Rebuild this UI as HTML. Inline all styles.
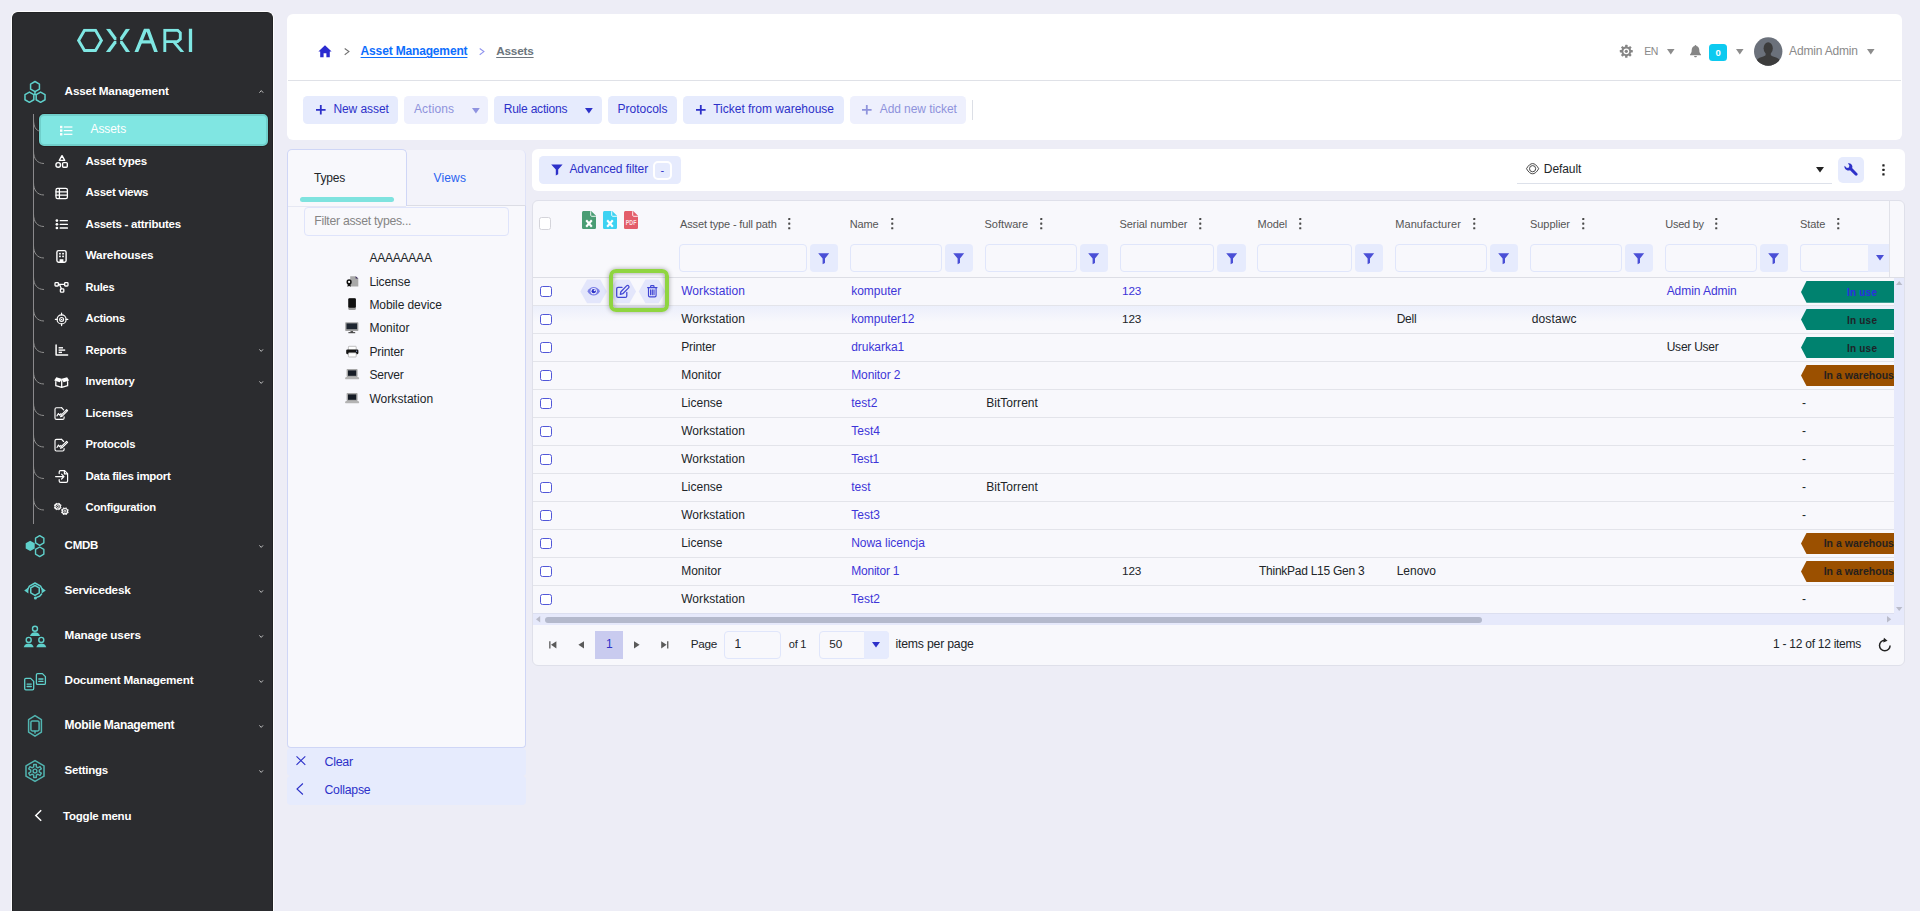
<!DOCTYPE html>
<html><head><meta charset="utf-8"><title>Assets</title>
<style>
html,body{margin:0;padding:0;overflow:hidden}
html{width:1920px;height:911px}
body{width:1920px;height:911px;overflow:hidden;background:#ededf6;font-family:"Liberation Sans", sans-serif;position:relative}
div,span,svg{position:absolute;box-sizing:border-box}
span{white-space:pre}
svg{overflow:visible}
</style></head><body>
<div style="left:12px;top:12px;width:261px;height:899px;background:#2b2c2f;border-radius:6px 6px 0 0;border:1px solid #222325;border-bottom:none;box-shadow:0 0 0 1px rgba(255,255,255,.85)"></div>
<svg style="left:0px;top:0px;" width="280" height="70" viewBox="0 0 280 70"><defs><clipPath id="lgc"><rect x="70" y="28.8" width="130" height="23.2"/></clipPath></defs>
<g clip-path="url(#lgc)"><g fill="none" stroke="#7fe7e3" stroke-width="2.9" stroke-linejoin="miter" stroke-linecap="butt">
<polygon points="78.6,40.4 84.5,30.25 95.5,30.25 101.4,40.4 95.5,50.55 84.5,50.55"/>
<path d="M135.95,53 L146.25,27.8 M156.35,53 L147.15,27.8" stroke-width="3.5"/><path d="M140.6,41.85 H152.4" stroke-width="3.1"/>
<path d="M164.8,53 V30.3 H177.6 L180.3,32.8 V39.2 L177.6,41.6 H166"/>
<path d="M173.6,41.6 L183.2,53"/>
<path d="M190.5,28 V53" stroke-width="3.3"/>
</g>
<g fill="#7fe7e3">
<polygon points="105.9,28.8 110.1,28.8 116.4,37.5 116.4,40.0 114.2,40.0"/>
<polygon points="105.9,52 110.1,52 116.4,43.3 116.4,40.8 114.2,40.8"/>
<polygon points="130.1,28.8 125.9,28.8 120.1,37.5 120.1,40.0 122.3,40.0"/>
<polygon points="130.1,52 125.9,52 120.1,43.3 120.1,40.8 122.3,40.8"/>
</g></g></svg>
<svg style="left:0px;top:0px;" width="280" height="120" viewBox="0 0 280 120"><g fill="none" stroke="#5fd0cb" stroke-width="1.5" stroke-linejoin="round">
<polygon points="39.42,89.15 35.00,91.70 30.58,89.15 30.58,84.05 35.00,81.50 39.42,84.05"/><polygon points="33.82,99.75 29.40,102.30 24.98,99.75 24.98,94.65 29.40,92.10 33.82,94.65"/><polygon points="45.02,99.75 40.60,102.30 36.18,99.75 36.18,94.65 40.60,92.10 45.02,94.65"/>
<path d="M35,91.7 V94 M35,94 L33.6,94.9 M35,94 L36.4,94.9"/></g></svg>
<span style="left:64.6px;top:84px;font-size:11.75px;line-height:14px;font-weight:700;color:#fff;letter-spacing:-0.187px;">Asset Management</span>
<svg style="left:258.5px;top:90.3px;" width="5" height="3" viewBox="0 0 5 3"><path d="M0.4,2.7 L2.3,0.6 L4.2,2.7" fill="none" stroke="#cfcfcf" stroke-width="0.9"/></svg>
<div style="left:32.8px;top:114px;width:1.4px;height:410px;background:#8a898c;"></div>
<div style="left:39px;top:114px;width:229px;height:32px;background:#80e6e2;border-radius:5px;border:2px solid #70cfcb;box-shadow:0 0 0 1px #242223"></div>
<span style="left:90.5px;top:122px;font-size:12.0px;line-height:14px;font-weight:400;color:#fff;letter-spacing:-0.076px;">Assets</span>
<span style="left:85.6px;top:154px;font-size:11.5px;line-height:14px;font-weight:700;color:#fff;letter-spacing:-0.311px;">Asset types</span>
<span style="left:85.6px;top:185px;font-size:11.5px;line-height:14px;font-weight:700;color:#fff;letter-spacing:-0.301px;">Asset views</span>
<span style="left:85.6px;top:217px;font-size:11.5px;line-height:14px;font-weight:700;color:#fff;letter-spacing:-0.272px;">Assets - attributes</span>
<span style="left:85.6px;top:248px;font-size:11.75px;line-height:14px;font-weight:700;color:#fff;letter-spacing:-0.163px;">Warehouses</span>
<span style="left:85.6px;top:281px;font-size:11.0px;line-height:13px;font-weight:700;color:#fff;letter-spacing:-0.236px;">Rules</span>
<span style="left:85.6px;top:311px;font-size:11.25px;line-height:14px;font-weight:700;color:#fff;letter-spacing:-0.271px;">Actions</span>
<span style="left:85.6px;top:343px;font-size:11.25px;line-height:14px;font-weight:700;color:#fff;letter-spacing:-0.232px;">Reports</span>
<span style="left:85.6px;top:374px;font-size:11.25px;line-height:14px;font-weight:700;color:#fff;letter-spacing:-0.193px;">Inventory</span>
<span style="left:85.6px;top:406px;font-size:11.5px;line-height:14px;font-weight:700;color:#fff;letter-spacing:-0.245px;">Licenses</span>
<span style="left:85.6px;top:437px;font-size:11.25px;line-height:14px;font-weight:700;color:#fff;letter-spacing:-0.257px;">Protocols</span>
<span style="left:85.6px;top:469px;font-size:11.5px;line-height:14px;font-weight:700;color:#fff;letter-spacing:-0.310px;">Data files import</span>
<span style="left:85.6px;top:500px;font-size:11.25px;line-height:14px;font-weight:700;color:#fff;letter-spacing:-0.267px;">Configuration</span>
<svg style="left:0px;top:0px;" width="280" height="540" viewBox="0 0 280 540"><g fill="none" stroke="#8d8d8d" stroke-width="1"><path d="M33.5,119.5 C33.5,126.5 36,130.5 39.5,131.0"/><path d="M33.5,151.0 C33.5,159.0 37.5,163.5 44,163.5"/><path d="M33.5,182.5 C33.5,190.5 37.5,195.0 44,195.0"/><path d="M33.5,214.0 C33.5,222.0 37.5,226.5 44,226.5"/><path d="M33.5,245.5 C33.5,253.5 37.5,258.0 44,258.0"/><path d="M33.5,277.0 C33.5,285.0 37.5,289.5 44,289.5"/><path d="M33.5,308.5 C33.5,316.5 37.5,321.0 44,321.0"/><path d="M33.5,340.0 C33.5,348.0 37.5,352.5 44,352.5"/><path d="M33.5,371.5 C33.5,379.5 37.5,384.0 44,384.0"/><path d="M33.5,403.0 C33.5,411.0 37.5,415.5 44,415.5"/><path d="M33.5,434.5 C33.5,442.5 37.5,447.0 44,447.0"/><path d="M33.5,466.0 C33.5,474.0 37.5,478.5 44,478.5"/><path d="M33.5,497.5 C33.5,505.5 37.5,510.0 44,510.0"/></g></svg>
<svg style="left:258.7px;top:349.2px;" width="5" height="3" viewBox="0 0 5 3"><path d="M0.4,0.4 L2.2,2.4 L4.0,0.4" fill="none" stroke="#cfcfcf" stroke-width="0.9"/></svg>
<svg style="left:258.7px;top:380.7px;" width="5" height="3" viewBox="0 0 5 3"><path d="M0.4,0.4 L2.2,2.4 L4.0,0.4" fill="none" stroke="#cfcfcf" stroke-width="0.9"/></svg>
<span style="left:64.6px;top:538px;font-size:11.5px;line-height:14px;font-weight:700;color:#fff;letter-spacing:-0.257px;">CMDB</span>
<svg style="left:258.7px;top:545.4px;" width="5" height="3" viewBox="0 0 5 3"><path d="M0.4,0.4 L2.2,2.4 L4.0,0.4" fill="none" stroke="#cfcfcf" stroke-width="0.9"/></svg>
<span style="left:64.6px;top:583px;font-size:11.75px;line-height:14px;font-weight:700;color:#fff;letter-spacing:-0.248px;">Servicedesk</span>
<svg style="left:258.7px;top:590.4px;" width="5" height="3" viewBox="0 0 5 3"><path d="M0.4,0.4 L2.2,2.4 L4.0,0.4" fill="none" stroke="#cfcfcf" stroke-width="0.9"/></svg>
<span style="left:64.6px;top:628px;font-size:11.75px;line-height:14px;font-weight:700;color:#fff;letter-spacing:-0.181px;">Manage users</span>
<svg style="left:258.7px;top:635.4px;" width="5" height="3" viewBox="0 0 5 3"><path d="M0.4,0.4 L2.2,2.4 L4.0,0.4" fill="none" stroke="#cfcfcf" stroke-width="0.9"/></svg>
<span style="left:64.6px;top:673px;font-size:11.75px;line-height:14px;font-weight:700;color:#fff;letter-spacing:-0.197px;">Document Management</span>
<svg style="left:258.7px;top:680.4px;" width="5" height="3" viewBox="0 0 5 3"><path d="M0.4,0.4 L2.2,2.4 L4.0,0.4" fill="none" stroke="#cfcfcf" stroke-width="0.9"/></svg>
<span style="left:64.6px;top:718px;font-size:12.0px;line-height:14px;font-weight:700;color:#fff;letter-spacing:-0.302px;">Mobile Management</span>
<svg style="left:258.7px;top:725.4px;" width="5" height="3" viewBox="0 0 5 3"><path d="M0.4,0.4 L2.2,2.4 L4.0,0.4" fill="none" stroke="#cfcfcf" stroke-width="0.9"/></svg>
<span style="left:64.6px;top:763px;font-size:11.5px;line-height:14px;font-weight:700;color:#fff;letter-spacing:-0.263px;">Settings</span>
<svg style="left:258.7px;top:770.4px;" width="5" height="3" viewBox="0 0 5 3"><path d="M0.4,0.4 L2.2,2.4 L4.0,0.4" fill="none" stroke="#cfcfcf" stroke-width="0.9"/></svg>
<span style="left:63.1px;top:809px;font-size:11.5px;line-height:14px;font-weight:700;color:#fff;letter-spacing:-0.239px;">Toggle menu</span>
<svg style="left:34px;top:809px;" width="9" height="13" viewBox="0 0 9 13"><path d="M7.2,1.2 L1.8,6.5 L7.2,11.8" fill="none" stroke="#fff" stroke-width="1.5"/></svg>
<svg style="left:0px;top:0px;" width="280" height="800" viewBox="0 0 280 800"><rect x="60" y="125.8" width="2.4" height="2.4" fill="#fff"/><rect x="63.8" y="126.4" width="8.6" height="1.2" fill="#fff"/><rect x="60" y="129.4" width="2.4" height="2.4" fill="#fff"/><rect x="63.8" y="130.0" width="8.6" height="1.2" fill="#fff"/><rect x="60" y="133.10000000000002" width="2.4" height="2.4" fill="#fff"/><rect x="63.8" y="133.70000000000002" width="8.6" height="1.2" fill="#fff"/><g fill="none" stroke="#fff" stroke-width="1.4" stroke-linejoin="round" stroke-linecap="round"><path d="M62,155.7 L64.7,160.4 H59.3 Z"/><circle cx="58.2" cy="164.9" r="2.3"/><rect x="62.6" y="162.6" width="4.7" height="4.6" rx="1"/></g><g fill="none" stroke="#fff" stroke-width="1.3" stroke-linejoin="round" stroke-linecap="round"><rect x="56" y="188.4" width="11.4" height="10.2" rx="1.6"/><path d="M56,191.8 H67.4 M56,195.2 H67.4 M59.4,188.6 V198.4"/></g><circle cx="56.9" cy="220.6" r="1.35" fill="#fff"/><rect x="59.6" y="219.95" width="8.4" height="1.3" rx="0.5" fill="#fff"/><circle cx="56.9" cy="224.3" r="1.35" fill="#fff"/><rect x="59.6" y="223.65" width="8.4" height="1.3" rx="0.5" fill="#fff"/><circle cx="56.9" cy="228.0" r="1.35" fill="#fff"/><rect x="59.6" y="227.35" width="8.4" height="1.3" rx="0.5" fill="#fff"/><g fill="none" stroke="#fff" stroke-width="1.4" stroke-linejoin="round" stroke-linecap="round"><rect x="56.9" y="250.6" width="9.2" height="11.6" rx="1.7"/></g><g fill="#fff"><rect x="59.1" y="252.9" width="1.7" height="1.6"/><rect x="62.2" y="252.9" width="1.7" height="1.6"/><rect x="59.1" y="255.6" width="1.7" height="1.6"/><rect x="62.2" y="255.6" width="1.7" height="1.6"/><path d="M59.6,262 V259.2 H63.4 V262 Z"/></g><g fill="none" stroke="#fff" stroke-width="1.3" stroke-linejoin="round" stroke-linecap="round"><rect x="55" y="282.6" width="3.4" height="3.4" rx="0.8"/><rect x="64.6" y="282.6" width="3.4" height="3.4" rx="0.8"/><rect x="60.4" y="288.8" width="3.4" height="3.4" rx="0.8"/><path d="M58.4,284.3 H64.6 M59.4,284.3 L61.4,288.8"/></g><g fill="none" stroke="#fff" stroke-width="1.2" stroke-linejoin="round" stroke-linecap="round"><circle cx="61.6" cy="319.4" r="4.5"/><circle cx="61.6" cy="319.4" r="1.9"/><path d="M61.6,313.2 V315 M61.6,323.8 V325.6 M55.4,319.4 H57.2 M66,319.4 H67.8"/></g><circle cx="61.6" cy="319.4" r="0.7" fill="#fff"/><g fill="none" stroke="#fff" stroke-width="1.5" stroke-linejoin="round" stroke-linecap="round"><path d="M56.1,345 V354.9 H67.6"/></g><g fill="#fff"><rect x="58.6" y="347.1" width="4.4" height="1.4"/><rect x="58.6" y="349.4" width="6.6" height="1.4"/><rect x="58.6" y="351.7" width="3.4" height="1.4"/></g><path d="M56.3,377.2 L61.7,378.7 L67.1,377.2 L69.2,380.6 L63.6,382.2 L61.7,379.6 L59.8,382.2 L54.2,380.6 Z" fill="#fff"/><g fill="none" stroke="#fff" stroke-width="1.3" stroke-linejoin="round" stroke-linecap="round"><path d="M55.8,381.6 V385.7 L61.7,387.4 L67.6,385.7 V381.6 M61.7,380.4 V387.2"/></g><g fill="none" stroke="#fff" stroke-width="1.15" stroke-linejoin="round" stroke-linecap="round"><path d="M61.6,407.7 H56.5 C55.6,407.7 55,408.3 55,409.2 V417.90000000000003 C55,418.8 55.6,419.40000000000003 56.5,419.40000000000003 H62.6 C63.5,419.40000000000003 64.1,418.8 64.1,417.90000000000003 V416.90000000000003"/><path d="M61.6,407.7 L63.6,409.90000000000003"/><path d="M57,415.90000000000003 L58.4,413.5 L59.6,415.1 L61,413.7"/><path d="M67.6,410.7 L62.2,416.1 L60.6,416.7 L61.2,415.1 L66.6,409.7 Z"/></g><g fill="none" stroke="#fff" stroke-width="1.15" stroke-linejoin="round" stroke-linecap="round"><path d="M61.6,439.29999999999995 H56.5 C55.6,439.29999999999995 55,439.9 55,440.79999999999995 V449.5 C55,450.4 55.6,451.0 56.5,451.0 H62.6 C63.5,451.0 64.1,450.4 64.1,449.5 V448.5"/><path d="M61.6,439.29999999999995 L63.6,441.5"/><path d="M57,447.5 L58.4,445.09999999999997 L59.6,446.7 L61,445.29999999999995"/><path d="M67.6,442.29999999999995 L62.2,447.7 L60.6,448.29999999999995 L61.2,446.7 L66.6,441.29999999999995 Z"/></g><g fill="none" stroke="#fff" stroke-width="1.2" stroke-linejoin="round" stroke-linecap="round"><path d="M59.2,473.6 V472 C59.2,471.2 59.8,470.7 60.6,470.7 H64.6 L67.6,473.7 V481 C67.6,481.8 67,482.4 66.2,482.4 H60.6 C59.8,482.4 59.2,481.8 59.2,481 V479.6"/><path d="M64.4,470.9 V473.9 H67.4"/><path d="M55.6,476.6 H63.8 M61.6,474.2 L64,476.6 L61.6,479"/></g><g fill="none" stroke="#fff" stroke-width="1.15"><circle cx="57.7" cy="506.5" r="2.7"/><circle cx="57.7" cy="506.5" r="1.08" stroke-width="0.9"/></g><g fill="none" stroke="#fff" stroke-width="1.5" stroke-linecap="butt"><path d="M60.47,507.65 L61.26,507.97"/><path d="M58.85,509.27 L59.17,510.06"/><path d="M56.55,509.27 L56.23,510.06"/><path d="M54.93,507.65 L54.14,507.97"/><path d="M54.93,505.35 L54.14,505.03"/><path d="M56.55,503.73 L56.23,502.94"/><path d="M58.85,503.73 L59.17,502.94"/><path d="M60.47,505.35 L61.26,505.03"/></g><g fill="none" stroke="#fff" stroke-width="1.15"><circle cx="64.9" cy="511.2" r="2.7"/><circle cx="64.9" cy="511.2" r="1.08" stroke-width="0.9"/></g><g fill="none" stroke="#fff" stroke-width="1.5" stroke-linecap="butt"><path d="M67.67,512.35 L68.46,512.67"/><path d="M66.05,513.97 L66.37,514.76"/><path d="M63.75,513.97 L63.43,514.76"/><path d="M62.13,512.35 L61.34,512.67"/><path d="M62.13,510.05 L61.34,509.73"/><path d="M63.75,508.43 L63.43,507.64"/><path d="M66.05,508.43 L66.37,507.64"/><path d="M67.67,510.05 L68.46,509.73"/></g><polygon points="34.70,548.50 30.20,551.10 25.70,548.50 25.70,543.30 30.20,540.70 34.70,543.30" fill="#5fd0cb"/><g fill="none" stroke="#5fd0cb" stroke-width="1.4" stroke-linejoin="round" stroke-linecap="round"><polygon points="43.86,542.90 39.70,545.30 35.54,542.90 35.54,538.10 39.70,535.70 43.86,538.10"/><polygon points="43.86,554.20 39.70,556.60 35.54,554.20 35.54,549.40 39.70,547.00 43.86,549.40"/></g><g fill="none" stroke="#5fd0cb" stroke-width="1.5" stroke-linejoin="round" stroke-linecap="round"><polygon points="39.24,592.85 35.00,595.30 30.76,592.85 30.76,587.95 35.00,585.50 39.24,587.95"/><path d="M27.4,590 L29.4,586.2 L35,583 L40.6,586.2 L42.6,590"/><path d="M41.6,594 L39.6,596.2 L36,597.6"/></g><path d="M28.4,587.6 L24.2,590.5 L28.4,593.4 Z M41.6,587.6 L45.8,590.5 L41.6,593.4 Z" fill="#5fd0cb"/><circle cx="35.4" cy="598" r="1.5" fill="#5fd0cb"/><g fill="none" stroke="#5fd0cb" stroke-width="1.4" stroke-linejoin="round" stroke-linecap="round"><circle cx="35" cy="628.7" r="2.5"/></g><path d="M30.0,636.1 C30.8,633.3000000000001 32.8,632.3000000000001 35,632.3000000000001 C37.2,632.3000000000001 39.2,633.3000000000001 40.0,636.1 Z" fill="#5fd0cb"/><g fill="none" stroke="#5fd0cb" stroke-width="1.4" stroke-linejoin="round" stroke-linecap="round"><circle cx="28.7" cy="639.9" r="2.5"/></g><path d="M23.7,647.3 C24.5,644.5 26.5,643.5 28.7,643.5 C30.9,643.5 32.9,644.5 33.7,647.3 Z" fill="#5fd0cb"/><g fill="none" stroke="#5fd0cb" stroke-width="1.4" stroke-linejoin="round" stroke-linecap="round"><circle cx="41.3" cy="639.9" r="2.5"/></g><path d="M36.3,647.3 C37.099999999999994,644.5 39.099999999999994,643.5 41.3,643.5 C43.5,643.5 45.5,644.5 46.3,647.3 Z" fill="#5fd0cb"/><g fill="none" stroke="#5fd0cb" stroke-width="1.3" stroke-linejoin="round" stroke-linecap="round"><path d="M36.4,674.8000000000001 C36.4,674.1 36.9,673.6 37.6,673.6 H42.4 L45.4,676.6 V683.1999999999999 C45.4,683.9 44.9,684.4 44.199999999999996,684.4 H37.6 C36.9,684.4 36.4,683.9 36.4,683.1999999999999 Z"/><path d="M38.8,679.0 H43.0 M38.8,681.4 H43.0"/></g><g fill="none" stroke="#5fd0cb" stroke-width="1.3" stroke-linejoin="round" stroke-linecap="round"><path d="M24.7,679.6 C24.7,678.9 25.2,678.4 25.9,678.4 H30.700000000000003 L33.7,681.4 V688.5999999999999 C33.7,689.3 33.2,689.8 32.5,689.8 H25.9 C25.2,689.8 24.7,689.3 24.7,688.5999999999999 Z"/><path d="M27.099999999999998,684.1 H31.300000000000004 M27.099999999999998,686.5 H31.300000000000004"/></g><g fill="none" stroke="#52b5b1" stroke-width="1.5" stroke-linejoin="round" stroke-linecap="round"><path d="M35,715.6 L41.4,719.6 V732.2 L35,736.2 L28.6,732.2 V719.6 Z"/></g><g fill="none" stroke="#52b5b1" stroke-width="1.5" stroke-linejoin="round" stroke-linecap="round"><rect x="30.9" y="721" width="8.2" height="10" rx="1.4"/><path d="M35,731.2 V733"/></g><g fill="none" stroke="#52b5b1" stroke-width="1.5" stroke-linejoin="round" stroke-linecap="round"><polygon points="44.01,776.20 35.00,781.40 25.99,776.20 25.99,765.80 35.00,760.60 44.01,765.80"/></g><g fill="none" stroke="#52b5b1" stroke-width="1.4" stroke-linejoin="round" stroke-linecap="round"><polygon points="33.70,766.80 33.67,764.43 36.33,764.43 36.30,766.80 37.99,767.77 40.02,766.56 41.35,768.87 39.29,770.02 39.29,771.98 41.35,773.13 40.02,775.44 37.99,774.23 36.30,775.20 36.33,777.57 33.67,777.57 33.70,775.20 32.01,774.23 29.98,775.44 28.65,773.13 30.71,771.98 30.71,770.02 28.65,768.87 29.98,766.56 32.01,767.77"/><circle cx="35" cy="771" r="1.9"/></g></svg>
<div style="left:287px;top:14px;width:1615px;height:126px;background:#fff;border-radius:6px"></div>
<div style="left:288px;top:80px;width:1613px;height:1px;background:#dfe1e7;"></div>
<svg style="left:318.2px;top:45.4px;" width="14.2" height="12.6" viewBox="0 0 14.2 12.6"><path d="M7,0.2 L13.6,6.6 H11.8 V12.2 H8.4 V8.2 H5.6 V12.2 H2.2 V6.6 H0.4 Z" fill="#2b2bd0"/></svg>
<svg style="left:343.5px;top:48px;" width="6" height="7.2" viewBox="0 0 6 7.2"><path d="M0.7,0.5 L4.9,3.6 L0.7,6.7" fill="none" stroke="#6f6f6f" stroke-width="1.1"/></svg>
<span style="left:360.6px;top:44px;font-size:12.0px;line-height:14px;font-weight:700;color:#0d6efd;letter-spacing:-0.160px;text-decoration:underline;text-underline-offset:1.5px;text-decoration-thickness:1px">Asset Management</span>
<svg style="left:478.5px;top:48px;" width="6" height="7.2" viewBox="0 0 6 7.2"><path d="M0.7,0.5 L4.9,3.6 L0.7,6.7" fill="none" stroke="#8f93ee" stroke-width="1.1"/></svg>
<span style="left:496.2px;top:44px;font-size:11.75px;line-height:14px;font-weight:700;color:#6c757d;letter-spacing:-0.189px;text-decoration:underline;text-underline-offset:1.5px;text-decoration-thickness:1px">Assets</span>
<svg style="left:1620px;top:45.2px;" width="12.6" height="12.6" viewBox="0 0 12.6 12.6"><g fill="#858585"><rect x="5.1" y="-0.2" width="2.4" height="3" rx="0.4" transform="rotate(0 6.3 6.3)"/><rect x="5.1" y="-0.2" width="2.4" height="3" rx="0.4" transform="rotate(45 6.3 6.3)"/><rect x="5.1" y="-0.2" width="2.4" height="3" rx="0.4" transform="rotate(90 6.3 6.3)"/><rect x="5.1" y="-0.2" width="2.4" height="3" rx="0.4" transform="rotate(135 6.3 6.3)"/><rect x="5.1" y="-0.2" width="2.4" height="3" rx="0.4" transform="rotate(180 6.3 6.3)"/><rect x="5.1" y="-0.2" width="2.4" height="3" rx="0.4" transform="rotate(225 6.3 6.3)"/><rect x="5.1" y="-0.2" width="2.4" height="3" rx="0.4" transform="rotate(270 6.3 6.3)"/><rect x="5.1" y="-0.2" width="2.4" height="3" rx="0.4" transform="rotate(315 6.3 6.3)"/><circle cx="6.3" cy="6.3" r="4.9"/><circle cx="6.3" cy="6.3" r="2.9" fill="#fff"/><circle cx="6.3" cy="6.3" r="1.6"/></g></svg>
<span style="left:1644.3px;top:45px;font-size:10.5px;line-height:13px;font-weight:400;color:#8a8a8a;letter-spacing:-0.525px;">EN</span>
<svg style="left:1667.3px;top:49.2px;" width="7.6" height="5.6" viewBox="0 0 7.6 5.6"><path d="M0,0 H7.6 L3.8,5.6 Z" fill="#8c8c8c"/></svg>
<svg style="left:1690.1px;top:45.3px;" width="11" height="12.4" viewBox="0 0 11 12.4"><path d="M5.5,0 C6.1,0 6.4,0.4 6.4,0.9 C8.4,1.4 9.3,3 9.3,5 C9.3,7.6 10.1,8.6 11,9.4 V10.2 H0 V9.4 C0.9,8.6 1.7,7.6 1.7,5 C1.7,3 2.6,1.4 4.6,0.9 C4.6,0.4 4.9,0 5.5,0 Z M4.1,10.9 H6.9 C6.9,11.8 6.3,12.3 5.5,12.3 C4.7,12.3 4.1,11.8 4.1,10.9 Z" fill="#858585"/></svg>
<div style="left:1709.2px;top:44.2px;width:17.8px;height:16.7px;background:#0dcaf0;border-radius:3.5px"></div>
<span style="left:1715.4px;top:47px;font-size:9.5px;line-height:11px;font-weight:700;color:#fff;">0</span>
<svg style="left:1736.1px;top:49.2px;" width="7.6" height="5.6" viewBox="0 0 7.6 5.6"><path d="M0,0 H7.6 L3.8,5.6 Z" fill="#8c8c8c"/></svg>
<svg style="left:1754px;top:37px;" width="28.5" height="29" viewBox="0 0 28.5 29"><defs><clipPath id="avc"><circle cx="14.2" cy="14.5" r="14.2"/></clipPath></defs>
<circle cx="14.2" cy="14.5" r="14.2" fill="#6b717b"/>
<g clip-path="url(#avc)" fill="#3c3c3c"><ellipse cx="14.2" cy="11.3" rx="4.6" ry="6"/>
<path d="M11.6,15 H16.8 V18.2 C18.5,19.6 22.5,20 24.8,22 C26,23 26.5,25 26.5,30 H1.9 C1.9,25 2.4,23 3.6,22 C5.9,20 9.9,19.6 11.6,18.2 Z"/></g></svg>
<span style="left:1789.1px;top:44px;font-size:12.0px;line-height:14px;font-weight:400;color:#8a8a8a;letter-spacing:-0.181px;">Admin Admin</span>
<svg style="left:1867.4px;top:49.2px;" width="7.6" height="5.6" viewBox="0 0 7.6 5.6"><path d="M0,0 H7.6 L3.8,5.6 Z" fill="#8c8c8c"/></svg>
<div style="left:303px;top:96px;width:95px;height:28px;background:#e6ebfd;border-radius:4.5px"></div>
<svg style="left:315.5px;top:105.4px;" width="9.6" height="9.6" viewBox="0 0 9.6 9.6"><path d="M4.8,0 V9.6 M0,4.8 H9.6" stroke="#2d31c9" stroke-width="1.8" fill="none"/></svg>
<span style="left:333.4px;top:102px;font-size:12.0px;line-height:14px;font-weight:400;color:#2d31c9;letter-spacing:-0.074px;">New asset</span>
<div style="left:404px;top:96px;width:84px;height:28px;background:#eef0fd;border-radius:4.5px"></div>
<span style="left:414px;top:102px;font-size:12.0px;line-height:14px;font-weight:400;color:#8f93dc;letter-spacing:0.099px;">Actions</span>
<svg style="left:471.6px;top:107.6px;" width="7.8" height="5.6" viewBox="0 0 7.8 5.6"><path d="M0,0 H7.8 L3.9,5.6 Z" fill="#8f93e0"/></svg>
<div style="left:494px;top:96px;width:108px;height:28px;background:#e6ebfd;border-radius:4.5px"></div>
<span style="left:503.7px;top:102px;font-size:12.0px;line-height:14px;font-weight:400;color:#2d31c9;letter-spacing:-0.213px;">Rule actions</span>
<svg style="left:585.4px;top:107.6px;" width="7.8" height="5.6" viewBox="0 0 7.8 5.6"><path d="M0,0 H7.8 L3.9,5.6 Z" fill="#2d31c9"/></svg>
<div style="left:608px;top:96px;width:69px;height:28px;background:#e6ebfd;border-radius:4.5px"></div>
<span style="left:617.5px;top:102px;font-size:12.0px;line-height:14px;font-weight:400;color:#2d31c9;letter-spacing:-0.004px;">Protocols</span>
<div style="left:683px;top:96px;width:161px;height:28px;background:#e6ebfd;border-radius:4.5px"></div>
<svg style="left:695.5px;top:105.4px;" width="9.6" height="9.6" viewBox="0 0 9.6 9.6"><path d="M4.8,0 V9.6 M0,4.8 H9.6" stroke="#2d31c9" stroke-width="1.8" fill="none"/></svg>
<span style="left:713.2px;top:102px;font-size:12.0px;line-height:14px;font-weight:400;color:#2d31c9;letter-spacing:-0.007px;">Ticket from warehouse</span>
<div style="left:850px;top:96px;width:116px;height:28px;background:#eef0fd;border-radius:4.5px"></div>
<svg style="left:861.6px;top:105.4px;" width="9.6" height="9.6" viewBox="0 0 9.6 9.6"><path d="M4.8,0 V9.6 M0,4.8 H9.6" stroke="#8f93dc" stroke-width="1.8" fill="none"/></svg>
<span style="left:879.7px;top:102px;font-size:12.0px;line-height:14px;font-weight:400;color:#8f93dc;letter-spacing:-0.063px;">Add new ticket</span>
<div style="left:972px;top:100px;width:1px;height:20px;background:#dcdfe6;"></div>
<div style="left:532px;top:149px;width:1373px;height:42px;background:#fff;border-radius:6px"></div>
<div style="left:539px;top:156px;width:142px;height:28px;background:#e6ebfd;border-radius:4.5px"></div>
<svg style="left:550.6px;top:164.4px;" width="11.8" height="11.8" viewBox="0 0 11.8 11.8"><path d="M0.2,0.4 H11.6 L7.2,5.6 V10.2 L4.8,11.6 V5.6 Z" fill="#2d31c9"/></svg>
<span style="left:569.4px;top:162px;font-size:12.0px;line-height:14px;font-weight:400;color:#2d31c9;letter-spacing:-0.041px;">Advanced filter</span>
<div style="left:653px;top:160.8px;width:19px;height:19px;background:transparent;border:2px solid #fff;border-radius:5px"></div>
<span style="left:660.6px;top:164px;font-size:11px;line-height:13px;font-weight:400;color:#2d31c9;">-</span>
<svg style="left:1525.6px;top:163px;" width="13.2" height="11.4" viewBox="0 0 13.2 11.4"><g fill="none" stroke="#333" stroke-width="0.9"><path d="M0.5,5.7 C2.4,2.2 4.6,0.6 6.6,0.6 C8.6,0.6 10.8,2.2 12.7,5.7 C10.8,9.2 8.6,10.8 6.6,10.8 C4.6,10.8 2.4,9.2 0.5,5.7 Z"/><circle cx="6.6" cy="5.7" r="3.1"/></g></svg>
<span style="left:1543.8px;top:162px;font-size:12.0px;line-height:14px;font-weight:400;color:#212529;letter-spacing:-0.082px;">Default</span>
<div style="left:1517px;top:183px;width:315px;height:1px;background:#dde1ea;"></div>
<svg style="left:1816.3px;top:167.4px;" width="8" height="5.4" viewBox="0 0 8 5.4"><path d="M0,0 H8 L4,5.4 Z" fill="#222"/></svg>
<div style="left:1838px;top:157px;width:26px;height:26px;background:#e6ebfd;border-radius:5px"></div>
<svg style="left:1844.3px;top:163.4px;" width="14" height="13" viewBox="0 0 14 13"><path d="M3.9,0.3 C5.8,-0.3 7.9,0.9 8.3,2.9 C8.5,3.7 8.4,4.4 8.1,5.1 L13.2,10.2 C13.8,10.8 13.8,11.7 13.2,12.3 C12.6,12.9 11.7,12.9 11.1,12.3 L6,7.2 C4.3,7.9 2.2,7.3 1.1,5.7 C0.5,4.8 0.3,3.7 0.6,2.7 L2.9,5 L4.9,4.4 L5.4,2.5 Z" fill="#2d31c9"/></svg>
<svg style="left:1881.6px;top:164.2px;" width="3" height="12" viewBox="0 0 3 12"><g fill="#222"><rect x="0.3" y="0.2" width="2.3" height="2.3" rx="0.5"/><rect x="0.3" y="4.7" width="2.3" height="2.3" rx="0.5"/><rect x="0.3" y="9.2" width="2.3" height="2.3" rx="0.5"/></g></svg>
<div style="left:287px;top:205.5px;width:239px;height:542px;background:#f8f8fc;border:1px solid #cfd6f6;border-top:none;border-radius:0 0 4px 4px"></div>
<div style="left:406px;top:150px;width:120px;height:56px;background:#f3f3fa;border-right:1px solid #dfe3f8;border-bottom:1px solid #dcdde5;border-radius:0 5px 0 0"></div>
<div style="left:287px;top:149px;width:120px;height:57px;background:#f8f8fc;border:1px solid #cfd6f6;border-bottom:none;border-radius:5px 5px 0 0"></div>
<div style="left:288px;top:205.5px;width:118px;height:1px;background:#e6e8f3;"></div>
<span style="left:313.9px;top:171px;font-size:12.0px;line-height:14px;font-weight:400;color:#212529;letter-spacing:-0.159px;">Types</span>
<span style="left:433.6px;top:171px;font-size:12.0px;line-height:14px;font-weight:400;color:#2962f0;letter-spacing:0.134px;">Views</span>
<div style="left:300px;top:197.2px;width:94px;height:4.6px;background:#7fe3df;border-radius:3px"></div>
<div style="left:304px;top:207px;width:205px;height:29px;background:#f8f8fc;border:1px solid #dfe4fb;border-radius:4px"></div>
<span style="left:314.3px;top:214px;font-size:12.25px;line-height:15px;font-weight:400;color:#858585;letter-spacing:-0.283px;">Filter asset types...</span>
<span style="left:369.4px;top:251px;font-size:12.0px;line-height:14px;font-weight:400;color:#212529;letter-spacing:-0.218px;">AAAAAAAA</span>
<span style="left:369.4px;top:275px;font-size:12.0px;line-height:14px;font-weight:400;color:#212529;letter-spacing:-0.073px;">License</span>
<span style="left:369.4px;top:298px;font-size:12.0px;line-height:14px;font-weight:400;color:#212529;letter-spacing:-0.078px;">Mobile device</span>
<span style="left:369.4px;top:321px;font-size:12.0px;line-height:14px;font-weight:400;color:#212529;letter-spacing:-0.002px;">Monitor</span>
<span style="left:369.4px;top:345px;font-size:12.0px;line-height:14px;font-weight:400;color:#212529;letter-spacing:-0.114px;">Printer</span>
<span style="left:369.4px;top:368px;font-size:12.0px;line-height:14px;font-weight:400;color:#212529;letter-spacing:-0.208px;">Server</span>
<span style="left:369.4px;top:392px;font-size:12.0px;line-height:14px;font-weight:400;color:#212529;letter-spacing:0.063px;">Workstation</span>
<svg style="left:345.6px;top:275.2px;" width="13" height="12.5" viewBox="0 0 13 12.5"><path d="M4.2,1.2 H9.6 L12.3,3.6 V11.6 H4.2 Z" fill="#a9a9a9"/><path d="M9.6,1.2 L12.3,3.6 H9.6 Z" fill="#3a2a5a"/><circle cx="3.1" cy="6.9" r="2.6" fill="#111"/><circle cx="3.1" cy="6.9" r="1.1" fill="#fff"/><path d="M1.8,9 L1.4,11.8 L3.1,10.9 L4.8,11.8 L4.4,9 Z" fill="#111"/></svg>
<svg style="left:347.9px;top:298px;" width="8.2" height="12.2" viewBox="0 0 8.2 12.2"><rect x="0.3" y="0.2" width="7.6" height="11.8" rx="1.3" fill="#9a9a9a"/><rect x="0.3" y="0.2" width="7.6" height="9.6" rx="1.2" fill="#111"/></svg>
<svg style="left:345.3px;top:322.2px;" width="13.6" height="11.2" viewBox="0 0 13.6 11.2"><rect x="0.2" y="0.2" width="13.2" height="8.8" rx="0.8" fill="#a2a2a2"/><rect x="1.5" y="1.4" width="10.6" height="5.8" fill="#1d2530"/><rect x="5.5" y="9" width="2.6" height="1.4" fill="#555"/><rect x="3.4" y="10.2" width="6.8" height="1" fill="#333"/></svg>
<svg style="left:345.6px;top:345.6px;" width="12.6" height="11.4" viewBox="0 0 12.6 11.4"><rect x="2.4" y="0.3" width="7.8" height="4" rx="0.6" fill="#fff" stroke="#999" stroke-width="0.6"/><rect x="0.2" y="3.6" width="12.2" height="4.6" rx="1.1" fill="#151515"/><rect x="2.4" y="6.8" width="7.8" height="4.2" rx="0.6" fill="#fff" stroke="#999" stroke-width="0.6"/><circle cx="10.6" cy="5.2" r="0.6" fill="#9ad"/></svg>
<svg style="left:344.9px;top:369.3px;" width="14.2" height="10.3" viewBox="0 0 14.2 10.3"><rect x="1.6" y="0.1" width="11" height="8" rx="0.8" fill="#a6a6a6"/><rect x="3" y="1.4" width="8.2" height="5.4" fill="#161c26"/><path d="M0.7,7.9 H13.5 L14.2,9.4 C14.2,9.9 13.9,10.2 13.5,10.2 H0.7 C0.3,10.2 0,9.9 0,9.4 Z" fill="#b4b4b4"/></svg>
<svg style="left:344.9px;top:393px;" width="14.2" height="10.3" viewBox="0 0 14.2 10.3"><rect x="1.6" y="0.1" width="11" height="8" rx="0.8" fill="#a6a6a6"/><rect x="3" y="1.4" width="8.2" height="5.4" fill="#161c26"/><path d="M0.7,7.9 H13.5 L14.2,9.4 C14.2,9.9 13.9,10.2 13.5,10.2 H0.7 C0.3,10.2 0,9.9 0,9.4 Z" fill="#b4b4b4"/></svg>
<div style="left:287px;top:748px;width:239px;height:28.2px;background:#e6ebfd;border-radius:4px"></div>
<div style="left:287px;top:776.4px;width:239px;height:28.4px;background:#e6ebfd;border-radius:4px"></div>
<svg style="left:295.6px;top:756.3px;" width="9.8" height="9.2" viewBox="0 0 9.8 9.2"><path d="M0.5,0.4 L9.3,8.8 M9.3,0.4 L0.5,8.8" stroke="#2d31c9" stroke-width="1.1" fill="none"/></svg>
<span style="left:324.5px;top:755px;font-size:12.5px;line-height:15px;font-weight:400;color:#2d31c9;letter-spacing:-0.306px;">Clear</span>
<svg style="left:296px;top:783px;" width="8" height="12" viewBox="0 0 8 12"><path d="M6.9,0.5 L1,6 L6.9,11.5" stroke="#2d31c9" stroke-width="1.1" fill="none"/></svg>
<span style="left:324.5px;top:783px;font-size:12.25px;line-height:15px;font-weight:400;color:#2d31c9;letter-spacing:-0.222px;">Collapse</span>
<div style="left:532px;top:200px;width:1373px;height:466px;background:#f8f8fc;border:1px solid #dfe0ea;border-radius:6px"></div>
<div style="left:1889px;top:201px;width:1px;height:76px;background:#e1e2e9;"></div>
<div style="left:533px;top:277px;width:1371px;height:1px;background:#dddee5;"></div>
<div style="left:1894px;top:278px;width:10px;height:347px;background:#e6e9fb;"></div>
<svg style="left:1895.8px;top:280.6px;" width="6.4" height="4" viewBox="0 0 6.4 4"><path d="M0,4 L3.2,0 L6.4,4 Z" fill="#b9bbc9"/></svg>
<svg style="left:1895.8px;top:607.4px;" width="6.4" height="4" viewBox="0 0 6.4 4"><path d="M0,0 L3.2,4 L6.4,0 Z" fill="#b9bbc9"/></svg>
<div style="left:539.3px;top:217px;width:11.6px;height:13.2px;background:#fff;border:1px solid #d4d4da;border-radius:2.5px"></div>
<svg style="left:582px;top:211px;" width="14" height="18.1" viewBox="0 0 14 18.1"><path d="M1.6,0 H9.2 L14,4.8 V16.5 C14,17.4 13.3,18.1 12.4,18.1 H1.6 C0.7,18.1 0,17.4 0,16.5 V1.6 C0,0.7 0.7,0 1.6,0 Z" fill="#4a9d74"/><path d="M8.7,0.2 V4.3 C8.7,4.9 9.1,5.3 9.7,5.3 H13.9" fill="none" stroke="#fff" stroke-width="0.9"/><path d="M4.2,9.2 L9.8,15.8 M9.8,9.2 L4.2,15.8" stroke="#fff" stroke-width="2.1" fill="none"/></svg>
<svg style="left:602.9px;top:211px;" width="14" height="18.1" viewBox="0 0 14 18.1"><path d="M1.6,0 H9.2 L14,4.8 V16.5 C14,17.4 13.3,18.1 12.4,18.1 H1.6 C0.7,18.1 0,17.4 0,16.5 V1.6 C0,0.7 0.7,0 1.6,0 Z" fill="#3dd2f2"/><path d="M8.7,0.2 V4.3 C8.7,4.9 9.1,5.3 9.7,5.3 H13.9" fill="none" stroke="#fff" stroke-width="0.9"/><path d="M4.2,9.2 L9.8,15.8 M9.8,9.2 L4.2,15.8" stroke="#fff" stroke-width="2.1" fill="none"/></svg>
<svg style="left:623.6px;top:211px;" width="14" height="18.1" viewBox="0 0 14 18.1"><path d="M1.6,0 H9.2 L14,4.8 V16.5 C14,17.4 13.3,18.1 12.4,18.1 H1.6 C0.7,18.1 0,17.4 0,16.5 V1.6 C0,0.7 0.7,0 1.6,0 Z" fill="#e35d6a"/><path d="M8.7,0.2 V4.3 C8.7,4.9 9.1,5.3 9.7,5.3 H13.9" fill="none" stroke="#fff" stroke-width="0.9"/><text x="7.1" y="13.9" font-size="7.2" font-weight="700" fill="#fff" fill-opacity="0.85" text-anchor="middle" font-family="Liberation Sans, sans-serif" textLength="10.6" lengthAdjust="spacingAndGlyphs">PDF</text></svg>
<span style="left:680px;top:218px;font-size:11.0px;line-height:13px;font-weight:400;color:#555;letter-spacing:-0.138px;">Asset type - full path</span>
<svg style="left:788.4px;top:218.4px;" width="2.5" height="11.4" viewBox="0 0 2.5 11.4"><g fill="#4a4a4a"><rect x="0.2" y="0" width="2.1" height="2.1" rx="0.4"/><rect x="0.2" y="4.6" width="2.1" height="2.1" rx="0.4"/><rect x="0.2" y="9.2" width="2.1" height="2.1" rx="0.4"/></g></svg>
<div style="left:679px;top:244px;width:128px;height:28px;background:#f8f8fc;border:1px solid #e0e6fb;border-radius:4px"></div>
<div style="left:810px;top:244px;width:28px;height:28px;background:#e6ebfd;border-radius:4px"></div>
<svg style="left:818.3px;top:252.6px;" width="11.4" height="11.4" viewBox="0 0 11.4 11.4"><path d="M0.2,0.3 H11.2 L7,5.4 V10 L4.6,11.2 V5.4 Z" fill="#4a4fd6"/></svg>
<span style="left:849.7px;top:218px;font-size:11.0px;line-height:13px;font-weight:400;color:#555;letter-spacing:-0.098px;">Name</span>
<svg style="left:890.5px;top:218.4px;" width="2.5" height="11.4" viewBox="0 0 2.5 11.4"><g fill="#4a4a4a"><rect x="0.2" y="0" width="2.1" height="2.1" rx="0.4"/><rect x="0.2" y="4.6" width="2.1" height="2.1" rx="0.4"/><rect x="0.2" y="9.2" width="2.1" height="2.1" rx="0.4"/></g></svg>
<div style="left:850px;top:244px;width:92px;height:28px;background:#f8f8fc;border:1px solid #e0e6fb;border-radius:4px"></div>
<div style="left:945px;top:244px;width:28px;height:28px;background:#e6ebfd;border-radius:4px"></div>
<svg style="left:953.3px;top:252.6px;" width="11.4" height="11.4" viewBox="0 0 11.4 11.4"><path d="M0.2,0.3 H11.2 L7,5.4 V10 L4.6,11.2 V5.4 Z" fill="#4a4fd6"/></svg>
<span style="left:984.4px;top:218px;font-size:11.0px;line-height:13px;font-weight:400;color:#555;letter-spacing:0.050px;">Software</span>
<svg style="left:1040.0px;top:218.4px;" width="2.5" height="11.4" viewBox="0 0 2.5 11.4"><g fill="#4a4a4a"><rect x="0.2" y="0" width="2.1" height="2.1" rx="0.4"/><rect x="0.2" y="4.6" width="2.1" height="2.1" rx="0.4"/><rect x="0.2" y="9.2" width="2.1" height="2.1" rx="0.4"/></g></svg>
<div style="left:985px;top:244px;width:92px;height:28px;background:#f8f8fc;border:1px solid #e0e6fb;border-radius:4px"></div>
<div style="left:1080px;top:244px;width:28px;height:28px;background:#e6ebfd;border-radius:4px"></div>
<svg style="left:1088.3px;top:252.6px;" width="11.4" height="11.4" viewBox="0 0 11.4 11.4"><path d="M0.2,0.3 H11.2 L7,5.4 V10 L4.6,11.2 V5.4 Z" fill="#4a4fd6"/></svg>
<span style="left:1119.4px;top:218px;font-size:11.0px;line-height:13px;font-weight:400;color:#555;letter-spacing:-0.039px;">Serial number</span>
<svg style="left:1199.2px;top:218.4px;" width="2.5" height="11.4" viewBox="0 0 2.5 11.4"><g fill="#4a4a4a"><rect x="0.2" y="0" width="2.1" height="2.1" rx="0.4"/><rect x="0.2" y="4.6" width="2.1" height="2.1" rx="0.4"/><rect x="0.2" y="9.2" width="2.1" height="2.1" rx="0.4"/></g></svg>
<div style="left:1120px;top:244px;width:94px;height:28px;background:#f8f8fc;border:1px solid #e0e6fb;border-radius:4px"></div>
<div style="left:1217px;top:244px;width:29px;height:28px;background:#e6ebfd;border-radius:4px"></div>
<svg style="left:1225.8px;top:252.6px;" width="11.4" height="11.4" viewBox="0 0 11.4 11.4"><path d="M0.2,0.3 H11.2 L7,5.4 V10 L4.6,11.2 V5.4 Z" fill="#4a4fd6"/></svg>
<span style="left:1257.5px;top:218px;font-size:11.0px;line-height:13px;font-weight:400;color:#555;letter-spacing:-0.037px;">Model</span>
<svg style="left:1299.3px;top:218.4px;" width="2.5" height="11.4" viewBox="0 0 2.5 11.4"><g fill="#4a4a4a"><rect x="0.2" y="0" width="2.1" height="2.1" rx="0.4"/><rect x="0.2" y="4.6" width="2.1" height="2.1" rx="0.4"/><rect x="0.2" y="9.2" width="2.1" height="2.1" rx="0.4"/></g></svg>
<div style="left:1257px;top:244px;width:95px;height:28px;background:#f8f8fc;border:1px solid #e0e6fb;border-radius:4px"></div>
<div style="left:1355px;top:244px;width:28px;height:28px;background:#e6ebfd;border-radius:4px"></div>
<svg style="left:1363.3px;top:252.6px;" width="11.4" height="11.4" viewBox="0 0 11.4 11.4"><path d="M0.2,0.3 H11.2 L7,5.4 V10 L4.6,11.2 V5.4 Z" fill="#4a4fd6"/></svg>
<span style="left:1395.2px;top:218px;font-size:11.0px;line-height:13px;font-weight:400;color:#555;letter-spacing:0.086px;">Manufacturer</span>
<svg style="left:1472.5px;top:218.4px;" width="2.5" height="11.4" viewBox="0 0 2.5 11.4"><g fill="#4a4a4a"><rect x="0.2" y="0" width="2.1" height="2.1" rx="0.4"/><rect x="0.2" y="4.6" width="2.1" height="2.1" rx="0.4"/><rect x="0.2" y="9.2" width="2.1" height="2.1" rx="0.4"/></g></svg>
<div style="left:1395px;top:244px;width:92px;height:28px;background:#f8f8fc;border:1px solid #e0e6fb;border-radius:4px"></div>
<div style="left:1490px;top:244px;width:28px;height:28px;background:#e6ebfd;border-radius:4px"></div>
<svg style="left:1498.3px;top:252.6px;" width="11.4" height="11.4" viewBox="0 0 11.4 11.4"><path d="M0.2,0.3 H11.2 L7,5.4 V10 L4.6,11.2 V5.4 Z" fill="#4a4fd6"/></svg>
<span style="left:1530px;top:218px;font-size:11.0px;line-height:13px;font-weight:400;color:#555;letter-spacing:-0.048px;">Supplier</span>
<svg style="left:1581.6px;top:218.4px;" width="2.5" height="11.4" viewBox="0 0 2.5 11.4"><g fill="#4a4a4a"><rect x="0.2" y="0" width="2.1" height="2.1" rx="0.4"/><rect x="0.2" y="4.6" width="2.1" height="2.1" rx="0.4"/><rect x="0.2" y="9.2" width="2.1" height="2.1" rx="0.4"/></g></svg>
<div style="left:1530px;top:244px;width:92px;height:28px;background:#f8f8fc;border:1px solid #e0e6fb;border-radius:4px"></div>
<div style="left:1625px;top:244px;width:28px;height:28px;background:#e6ebfd;border-radius:4px"></div>
<svg style="left:1633.3px;top:252.6px;" width="11.4" height="11.4" viewBox="0 0 11.4 11.4"><path d="M0.2,0.3 H11.2 L7,5.4 V10 L4.6,11.2 V5.4 Z" fill="#4a4fd6"/></svg>
<span style="left:1665.2px;top:218px;font-size:11.0px;line-height:13px;font-weight:400;color:#555;letter-spacing:-0.240px;">Used by</span>
<svg style="left:1715.3999999999999px;top:218.4px;" width="2.5" height="11.4" viewBox="0 0 2.5 11.4"><g fill="#4a4a4a"><rect x="0.2" y="0" width="2.1" height="2.1" rx="0.4"/><rect x="0.2" y="4.6" width="2.1" height="2.1" rx="0.4"/><rect x="0.2" y="9.2" width="2.1" height="2.1" rx="0.4"/></g></svg>
<div style="left:1665px;top:244px;width:92px;height:28px;background:#f8f8fc;border:1px solid #e0e6fb;border-radius:4px"></div>
<div style="left:1760px;top:244px;width:28px;height:28px;background:#e6ebfd;border-radius:4px"></div>
<svg style="left:1768.3px;top:252.6px;" width="11.4" height="11.4" viewBox="0 0 11.4 11.4"><path d="M0.2,0.3 H11.2 L7,5.4 V10 L4.6,11.2 V5.4 Z" fill="#4a4fd6"/></svg>
<span style="left:1800px;top:218px;font-size:11.0px;line-height:13px;font-weight:400;color:#555;letter-spacing:-0.108px;">State</span>
<svg style="left:1837.3px;top:218.4px;" width="2.5" height="11.4" viewBox="0 0 2.5 11.4"><g fill="#4a4a4a"><rect x="0.2" y="0" width="2.1" height="2.1" rx="0.4"/><rect x="0.2" y="4.6" width="2.1" height="2.1" rx="0.4"/><rect x="0.2" y="9.2" width="2.1" height="2.1" rx="0.4"/></g></svg>
<div style="left:1800px;top:244px;width:89px;height:28px;background:#f8f8fc;border:1px solid #e0e6fb;border-right:none;border-radius:4px 0 0 4px"></div>
<div style="left:1868px;top:244px;width:21px;height:28px;background:#e6ebfd;"></div>
<svg style="left:1876.3px;top:255.4px;" width="8" height="5.6" viewBox="0 0 8 5.6"><path d="M0,0 H8 L4,5.6 Z" fill="#4a4fd6"/></svg>
<div style="left:533px;top:306px;width:1361px;height:16px;background:linear-gradient(#eceffb,#f8f8fc);"></div>
<div style="left:540.2px;top:286.1px;width:11.6px;height:11.2px;background:#fff;border:1.2px solid #5157d8;border-radius:2.5px"></div>
<span style="left:681.2px;top:284px;font-size:12.0px;line-height:14px;font-weight:400;color:#3d35d8;letter-spacing:0.058px;">Workstation</span>
<span style="left:851.2px;top:284px;font-size:12.0px;line-height:14px;font-weight:400;color:#3d35d8;letter-spacing:-0.004px;">komputer</span>
<span style="left:1122px;top:284px;font-size:11.75px;line-height:14px;font-weight:400;color:#3d35d8;letter-spacing:-0.146px;">123</span>
<span style="left:1666.7px;top:284px;font-size:12.0px;line-height:14px;font-weight:400;color:#3d35d8;letter-spacing:-0.067px;">Admin Admin</span>
<svg style="left:1801px;top:281.0px;" width="93" height="21.8" viewBox="0 0 93 21.8"><path d="M0,10.9 L5.5,0 H93 V21.8 H5.5 Z" fill="#00826f"/></svg>
<span style="left:1846.9px;top:287px;font-size:10.0px;line-height:12px;font-weight:700;color:#2b2fe0;letter-spacing:0.235px;">In use</span>
<div style="left:533px;top:305.0px;width:1361px;height:1px;background:#e3e4ea;"></div>
<div style="left:540.2px;top:314.1px;width:11.6px;height:11.2px;background:#fff;border:1.2px solid #5157d8;border-radius:2.5px"></div>
<span style="left:681.2px;top:312px;font-size:12.0px;line-height:14px;font-weight:400;color:#212529;letter-spacing:0.058px;">Workstation</span>
<span style="left:851.2px;top:312px;font-size:12.0px;line-height:14px;font-weight:400;color:#3d35d8;letter-spacing:-0.013px;">komputer12</span>
<span style="left:1122px;top:312px;font-size:11.75px;line-height:14px;font-weight:400;color:#212529;letter-spacing:-0.146px;">123</span>
<span style="left:1396.7px;top:312px;font-size:12.0px;line-height:14px;font-weight:400;color:#212529;letter-spacing:-0.263px;">Dell</span>
<span style="left:1531.7px;top:312px;font-size:12.0px;line-height:14px;font-weight:400;color:#212529;letter-spacing:0.149px;">dostawc</span>
<svg style="left:1801px;top:309.0px;" width="93" height="21" viewBox="0 0 93 21"><path d="M0,10.5 L5.5,0 H93 V21 H5.5 Z" fill="#00826f"/></svg>
<span style="left:1846.9px;top:315px;font-size:10.0px;line-height:12px;font-weight:700;color:#1f2328;letter-spacing:0.235px;">In use</span>
<div style="left:533px;top:333.0px;width:1361px;height:1px;background:#e3e4ea;"></div>
<div style="left:540.2px;top:342.1px;width:11.6px;height:11.2px;background:#fff;border:1.2px solid #5157d8;border-radius:2.5px"></div>
<span style="left:681.2px;top:340px;font-size:12.0px;line-height:14px;font-weight:400;color:#212529;letter-spacing:-0.130px;">Printer</span>
<span style="left:851.2px;top:340px;font-size:12.0px;line-height:14px;font-weight:400;color:#3d35d8;letter-spacing:-0.044px;">drukarka1</span>
<span style="left:1666.7px;top:340px;font-size:12.0px;line-height:14px;font-weight:400;color:#212529;letter-spacing:-0.237px;">User User</span>
<svg style="left:1801px;top:337.0px;" width="93" height="21" viewBox="0 0 93 21"><path d="M0,10.5 L5.5,0 H93 V21 H5.5 Z" fill="#00826f"/></svg>
<span style="left:1846.9px;top:343px;font-size:10.0px;line-height:12px;font-weight:700;color:#1f2328;letter-spacing:0.235px;">In use</span>
<div style="left:533px;top:361.0px;width:1361px;height:1px;background:#e3e4ea;"></div>
<div style="left:540.2px;top:370.1px;width:11.6px;height:11.2px;background:#fff;border:1.2px solid #5157d8;border-radius:2.5px"></div>
<span style="left:681.2px;top:368px;font-size:12.0px;line-height:14px;font-weight:400;color:#212529;letter-spacing:-0.002px;">Monitor</span>
<span style="left:851.2px;top:368px;font-size:12.0px;line-height:14px;font-weight:400;color:#3d35d8;letter-spacing:-0.092px;">Monitor 2</span>
<svg style="left:1801px;top:365.0px;" width="93" height="21" viewBox="0 0 93 21"><path d="M0,10.5 L5.5,0 H93 V21 H5.5 Z" fill="#9b5000"/></svg>
<div style="left:1823.7px;top:367px;width:70.3px;height:16px;overflow:hidden"><span style="left:0;top:2px;font-size:10.5px;line-height:13px;font-weight:700;color:#26211f;letter-spacing:0.02px">In a warehouse</span></div>
<div style="left:533px;top:389.0px;width:1361px;height:1px;background:#e3e4ea;"></div>
<div style="left:540.2px;top:398.1px;width:11.6px;height:11.2px;background:#fff;border:1.2px solid #5157d8;border-radius:2.5px"></div>
<span style="left:681.2px;top:396px;font-size:12.0px;line-height:14px;font-weight:400;color:#212529;letter-spacing:-0.019px;">License</span>
<span style="left:851.2px;top:396px;font-size:12.0px;line-height:14px;font-weight:400;color:#3d35d8;letter-spacing:0.052px;">test2</span>
<span style="left:986.2px;top:396px;font-size:12.0px;line-height:14px;font-weight:400;color:#212529;letter-spacing:0.041px;">BitTorrent</span>
<span style="left:1802px;top:396px;font-size:12px;line-height:14px;font-weight:400;color:#212529;">-</span>
<div style="left:533px;top:417.0px;width:1361px;height:1px;background:#e3e4ea;"></div>
<div style="left:540.2px;top:426.1px;width:11.6px;height:11.2px;background:#fff;border:1.2px solid #5157d8;border-radius:2.5px"></div>
<span style="left:681.2px;top:424px;font-size:12.0px;line-height:14px;font-weight:400;color:#212529;letter-spacing:0.058px;">Workstation</span>
<span style="left:851.2px;top:424px;font-size:12.0px;line-height:14px;font-weight:400;color:#3d35d8;letter-spacing:0.014px;">Test4</span>
<span style="left:1802px;top:424px;font-size:12px;line-height:14px;font-weight:400;color:#212529;">-</span>
<div style="left:533px;top:445.0px;width:1361px;height:1px;background:#e3e4ea;"></div>
<div style="left:540.2px;top:454.1px;width:11.6px;height:11.2px;background:#fff;border:1.2px solid #5157d8;border-radius:2.5px"></div>
<span style="left:681.2px;top:452px;font-size:12.0px;line-height:14px;font-weight:400;color:#212529;letter-spacing:0.058px;">Workstation</span>
<span style="left:851.2px;top:452px;font-size:12.0px;line-height:14px;font-weight:400;color:#3d35d8;letter-spacing:-0.153px;">Test1</span>
<span style="left:1802px;top:452px;font-size:12px;line-height:14px;font-weight:400;color:#212529;">-</span>
<div style="left:533px;top:473.0px;width:1361px;height:1px;background:#e3e4ea;"></div>
<div style="left:540.2px;top:482.1px;width:11.6px;height:11.2px;background:#fff;border:1.2px solid #5157d8;border-radius:2.5px"></div>
<span style="left:681.2px;top:480px;font-size:12.0px;line-height:14px;font-weight:400;color:#212529;letter-spacing:-0.019px;">License</span>
<span style="left:851.2px;top:480px;font-size:12.0px;line-height:14px;font-weight:400;color:#3d35d8;letter-spacing:0.045px;">test</span>
<span style="left:986.2px;top:480px;font-size:12.0px;line-height:14px;font-weight:400;color:#212529;letter-spacing:0.041px;">BitTorrent</span>
<span style="left:1802px;top:480px;font-size:12px;line-height:14px;font-weight:400;color:#212529;">-</span>
<div style="left:533px;top:501.0px;width:1361px;height:1px;background:#e3e4ea;"></div>
<div style="left:540.2px;top:510.1px;width:11.6px;height:11.2px;background:#fff;border:1.2px solid #5157d8;border-radius:2.5px"></div>
<span style="left:681.2px;top:508px;font-size:12.0px;line-height:14px;font-weight:400;color:#212529;letter-spacing:0.058px;">Workstation</span>
<span style="left:851.2px;top:508px;font-size:12.0px;line-height:14px;font-weight:400;color:#3d35d8;letter-spacing:0.014px;">Test3</span>
<span style="left:1802px;top:508px;font-size:12px;line-height:14px;font-weight:400;color:#212529;">-</span>
<div style="left:533px;top:529.0px;width:1361px;height:1px;background:#e3e4ea;"></div>
<div style="left:540.2px;top:538.1px;width:11.6px;height:11.2px;background:#fff;border:1.2px solid #5157d8;border-radius:2.5px"></div>
<span style="left:681.2px;top:536px;font-size:12.0px;line-height:14px;font-weight:400;color:#212529;letter-spacing:-0.019px;">License</span>
<span style="left:851.2px;top:536px;font-size:12.0px;line-height:14px;font-weight:400;color:#3d35d8;letter-spacing:-0.024px;">Nowa licencja</span>
<svg style="left:1801px;top:533.0px;" width="93" height="21" viewBox="0 0 93 21"><path d="M0,10.5 L5.5,0 H93 V21 H5.5 Z" fill="#9b5000"/></svg>
<div style="left:1823.7px;top:535px;width:70.3px;height:16px;overflow:hidden"><span style="left:0;top:2px;font-size:10.5px;line-height:13px;font-weight:700;color:#26211f;letter-spacing:0.02px">In a warehouse</span></div>
<div style="left:533px;top:557.0px;width:1361px;height:1px;background:#e3e4ea;"></div>
<div style="left:540.2px;top:566.1px;width:11.6px;height:11.2px;background:#fff;border:1.2px solid #5157d8;border-radius:2.5px"></div>
<span style="left:681.2px;top:564px;font-size:12.0px;line-height:14px;font-weight:400;color:#212529;letter-spacing:-0.002px;">Monitor</span>
<span style="left:851.2px;top:564px;font-size:12.0px;line-height:14px;font-weight:400;color:#3d35d8;letter-spacing:-0.210px;">Monitor 1</span>
<span style="left:1122px;top:564px;font-size:11.75px;line-height:14px;font-weight:400;color:#212529;letter-spacing:-0.146px;">123</span>
<span style="left:1259px;top:564px;font-size:12.0px;line-height:14px;font-weight:400;color:#212529;letter-spacing:-0.262px;">ThinkPad L15 Gen 3</span>
<span style="left:1396.7px;top:564px;font-size:12.0px;line-height:14px;font-weight:400;color:#212529;letter-spacing:-0.014px;">Lenovo</span>
<svg style="left:1801px;top:561.0px;" width="93" height="21" viewBox="0 0 93 21"><path d="M0,10.5 L5.5,0 H93 V21 H5.5 Z" fill="#9b5000"/></svg>
<div style="left:1823.7px;top:563px;width:70.3px;height:16px;overflow:hidden"><span style="left:0;top:2px;font-size:10.5px;line-height:13px;font-weight:700;color:#26211f;letter-spacing:0.02px">In a warehouse</span></div>
<div style="left:533px;top:585.0px;width:1361px;height:1px;background:#e3e4ea;"></div>
<div style="left:540.2px;top:594.1px;width:11.6px;height:11.2px;background:#fff;border:1.2px solid #5157d8;border-radius:2.5px"></div>
<span style="left:681.2px;top:592px;font-size:12.0px;line-height:14px;font-weight:400;color:#212529;letter-spacing:0.058px;">Workstation</span>
<span style="left:851.2px;top:592px;font-size:12.0px;line-height:14px;font-weight:400;color:#3d35d8;letter-spacing:0.014px;">Test2</span>
<span style="left:1802px;top:592px;font-size:12px;line-height:14px;font-weight:400;color:#212529;">-</span>
<div style="left:533px;top:613px;width:1361px;height:1px;background:#dcdff0;"></div>
<div style="left:533px;top:614px;width:1361px;height:11px;background:#e6e9fb;"></div>
<div style="left:545px;top:616.5px;width:936.5px;height:6px;background:#b4b9cc;border-radius:3px"></div>
<svg style="left:535.6px;top:616px;" width="4.2" height="6.4" viewBox="0 0 4.2 6.4"><path d="M4.2,0 L0,3.2 L4.2,6.4 Z" fill="#b9bbc9"/></svg>
<svg style="left:1886.8px;top:616px;" width="4.2" height="6.4" viewBox="0 0 4.2 6.4"><path d="M0,0 L4.2,3.2 L0,6.4 Z" fill="#b9bbc9"/></svg>
<div style="left:533px;top:278px;width:140px;height:27px;overflow:hidden"><svg style="left:0;top:0" width="140" height="27" viewBox="533 278 140 27"><polygon points="580.3000000000001,291.4 587.0,279.59999999999997 600.2,279.59999999999997 606.9,291.4 600.2,303.2 587.0,303.2" fill="#e3e6fb"/><polygon points="609.5,291.4 616.1999999999999,279.59999999999997 629.4,279.59999999999997 636.0999999999999,291.4 629.4,303.2 616.1999999999999,303.2" fill="#e3e6fb"/><polygon points="638.7,291.4 645.4,279.59999999999997 658.6,279.59999999999997 665.3,291.4 658.6,303.2 645.4,303.2" fill="#e3e6fb"/></svg></div>
<svg style="left:586.9px;top:286.1px;" width="13.4" height="10.4" viewBox="0 0 12.4 8.6"><path d="M0.3,4.3 C2,1.5 4,0.3 6.2,0.3 C8.4,0.3 10.4,1.5 12.1,4.3 C10.4,7.1 8.4,8.3 6.2,8.3 C4,8.3 2,7.1 0.3,4.3 Z" fill="#7a7fe6"/><circle cx="6.2" cy="4.3" r="2.9" fill="#eceefd"/><circle cx="6.2" cy="4.3" r="2" fill="#2d31c9"/><circle cx="7" cy="3.5" r="0.8" fill="#eceefd"/></svg>
<svg style="left:615.6px;top:284.6px;" width="13.4" height="13.2" viewBox="0 0 13.4 13.2"><g fill="none" stroke="#4146d4" stroke-width="1.25" stroke-linejoin="round" stroke-linecap="round"><path d="M6,2.4 H2.2 C1.3,2.4 0.7,3 0.7,3.9 V11 C0.7,11.9 1.3,12.5 2.2,12.5 H9.3 C10.2,12.5 10.8,11.9 10.8,11 V7.4"/><path d="M10.6,0.9 C11.2,0.3 12.1,0.3 12.6,0.9 C13.2,1.5 13.2,2.3 12.6,2.9 L6.8,8.7 L4.3,9.3 L4.9,6.7 Z"/></g></svg>
<svg style="left:647px;top:285px;" width="10.6" height="12.5" viewBox="0 0 10.6 12.5"><g fill="none" stroke="#4146d4" stroke-width="1.15" stroke-linecap="round"><path d="M0.6,2.6 H10"/><path d="M3.6,2.4 V1.4 C3.6,0.9 3.9,0.6 4.4,0.6 H6.2 C6.7,0.6 7,0.9 7,1.4 V2.4"/><path d="M1.5,2.8 V10.6 C1.5,11.4 2,11.9 2.8,11.9 H7.8 C8.6,11.9 9.1,11.4 9.1,10.6 V2.8"/><path d="M3.6,4.8 V9.8 M5.3,4.8 V9.8 M7,4.8 V9.8"/></g></svg>
<div style="left:608.5px;top:269.3px;width:60px;height:43px;background:transparent;border:4px solid #8fd540;border-radius:7px;box-shadow:0 0 5px rgba(0,0,0,.33), inset 0 0 5px rgba(0,0,0,.38)"></div>
<svg style="left:548.8px;top:641.2px;" width="7.6" height="7.6" viewBox="0 0 7.6 7.6"><path d="M0.2,0.2 H1.5 V7.4 H0.2 Z M7.4,0.2 V7.4 L2,3.8 Z" fill="#5a5a5a"/></svg>
<svg style="left:578.2px;top:641.2px;" width="6" height="7.6" viewBox="0 0 6 7.6"><path d="M6,0.2 V7.4 L0.4,3.8 Z" fill="#5a5a5a"/></svg>
<div style="left:595px;top:631px;width:28px;height:28px;background:#c9cbef;"></div>
<span style="left:605.9px;top:637px;font-size:12px;line-height:14px;font-weight:400;color:#2d31c9;">1</span>
<svg style="left:633.8px;top:641.2px;" width="6" height="7.6" viewBox="0 0 6 7.6"><path d="M0,0.2 V7.4 L5.6,3.8 Z" fill="#5a5a5a"/></svg>
<svg style="left:660.8px;top:641.2px;" width="7.6" height="7.6" viewBox="0 0 7.6 7.6"><path d="M6.1,0.2 H7.4 V7.4 H6.1 Z M0.2,0.2 V7.4 L5.6,3.8 Z" fill="#5a5a5a"/></svg>
<span style="left:690.8px;top:637px;font-size:11.75px;line-height:14px;font-weight:400;color:#212529;letter-spacing:-0.300px;">Page</span>
<div style="left:724px;top:631px;width:57px;height:28px;background:#f8f8fc;border:1px solid #e0e6fb;border-radius:4px"></div>
<span style="left:734.5px;top:637px;font-size:12px;line-height:14px;font-weight:400;color:#212529;">1</span>
<span style="left:788.8px;top:638px;font-size:11.0px;line-height:13px;font-weight:400;color:#212529;letter-spacing:-0.245px;">of 1</span>
<div style="left:819px;top:631px;width:70px;height:28px;background:#f8f8fc;border:1px solid #e0e6fb;border-radius:4px"></div>
<div style="left:864px;top:631px;width:25px;height:28px;background:#e6ebfd;border-radius:0 4px 4px 0"></div>
<span style="left:829.3px;top:637px;font-size:11.75px;line-height:14px;font-weight:400;color:#212529;letter-spacing:-0.187px;">50</span>
<svg style="left:872px;top:642.4px;" width="8" height="5.4" viewBox="0 0 8 5.4"><path d="M0,0 H8 L4,5.4 Z" fill="#2d31c9"/></svg>
<span style="left:895.5px;top:637px;font-size:12.25px;line-height:15px;font-weight:400;color:#212529;letter-spacing:-0.206px;">items per page</span>
<span style="left:1773.1px;top:637px;font-size:12.0px;line-height:14px;font-weight:400;color:#212529;letter-spacing:-0.270px;">1 - 12 of 12 items</span>
<svg style="left:1878.2px;top:637.6px;" width="14" height="14.6" viewBox="0 0 14 14.6"><path d="M6.8,2.2 A5.3,5.3 0 1 0 12.1,7.5" fill="none" stroke="#222" stroke-width="1.5"/><path d="M5.6,0 L9.6,2.3 L5.6,4.8 Z" fill="#222" transform="rotate(8 7 2.3)"/></svg>
</body></html>
